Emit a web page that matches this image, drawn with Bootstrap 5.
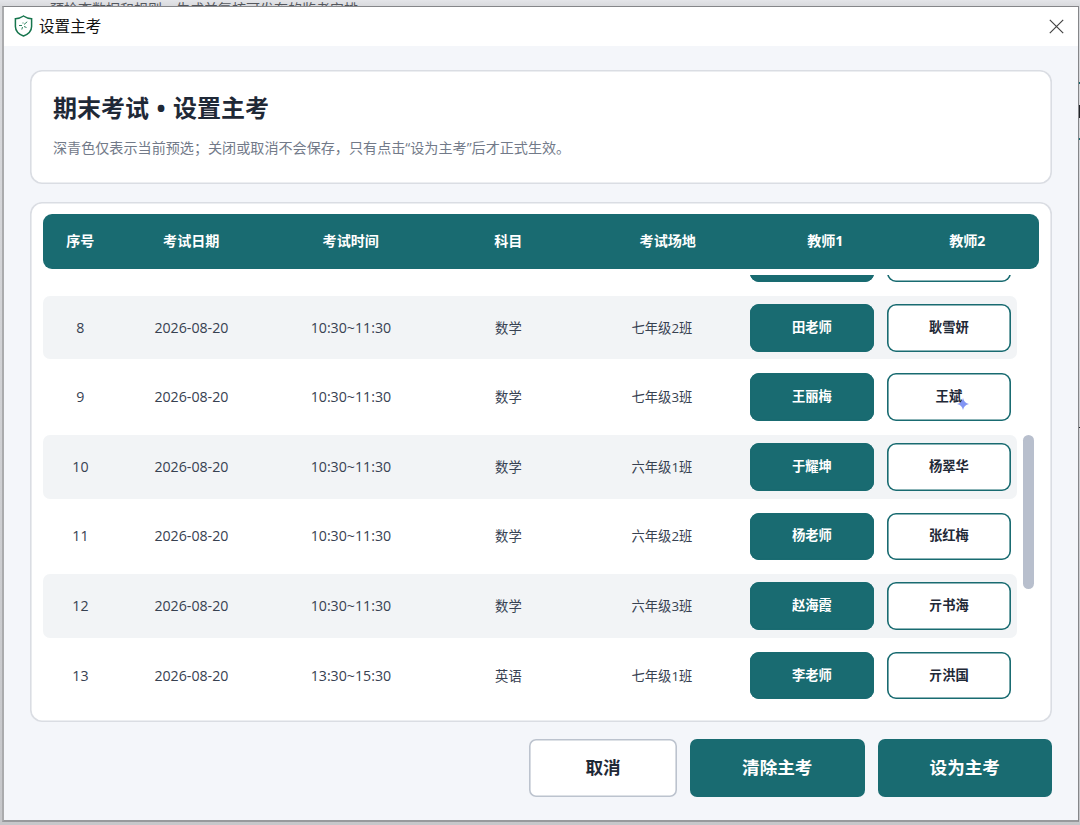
<!DOCTYPE html>
<html lang="zh-CN">
<head>
<meta charset="utf-8">
<title>设置主考</title>
<link href="https://cdn.jsdelivr.net/npm/bootstrap@5.3.0/dist/css/bootstrap.min.css" rel="stylesheet">
<style>
:root{--teal:#196b71;--ink:#1f2937}
body{width:1080px;height:825px;overflow:hidden;background:#d3d4d7;color:#374151;font-family:"Open Sans","Noto Sans CJK SC",sans-serif;font-size:13.3px;line-height:20px}
.desk{width:1080px;height:825px;padding:6px 1px 3px 2px;background:linear-gradient(#e4e5e9 0,#d9dadd 6px,#c6c7ca 100%)}
.behind-text{left:50px;top:-1px;font-size:14px;color:#55585e;line-height:20px;white-space:nowrap}
.window-box{position:relative;height:816px;background:#f4f6fa;border:1px solid #858689;border-left:2px solid #aaabad;border-bottom:2px solid #98999c}
.title-strip{height:39px;background:#fff;padding:0 14px 0 10px;font-size:15.6px;color:#111}
.title-strip span{margin:-2px 0 0 6px}
.title-strip svg{margin-top:-1px}
.panel{background:#fff;box-shadow:inset 0 0 0 1.6px #dadde3;border-radius:12px}
.intro{height:113.5px;padding:22px 23px 0}
.intro h1{font-size:24px;line-height:32px;color:var(--ink);margin:0}
.dot{width:24px}
.intro p{font-size:14.1px;line-height:20px;color:#727a89;margin:14px 0 0}
.work{padding:24px 26px 0 26px}
.sheet{height:520px;margin-top:18px;padding:12.5px 13px 0}
.head-row,.data-row{display:grid;align-items:center;text-align:center}
.head-row{grid-template-columns:74px 148px 171px 144px 175px 140px 144px;width:996px;height:54.5px;background:var(--teal);color:#fff;font-size:14.1px;font-weight:700;border-radius:9px}
.head-row span{padding-left:.5px}
.scroller{height:434px;width:996px;margin-top:6.500px}
.rows{width:974px;margin-top:-48.6px}
.data-row{grid-template-columns:74px 148px 171px 144px 163px 137px 137px;height:63.5px;margin-bottom:6.07px;border-radius:7px}
.data-row>*{padding-left:.8px}
.data-row.shaded{background:#f2f4f6}
.digits{font-size:14.2px}
.pick{width:123.5px;height:47.700px;border-radius:9px;padding:0;font-size:13.3px;font-weight:700;border:0;box-shadow:inset 0 0 0 1.6px var(--teal);color:var(--ink);background:#fff}
.pick.chosen{background:var(--teal);color:#fff}
.thumb{width:10.500px;height:154px;border-radius:6px;background:#b8bfcd;margin:160px 0 0 6px}
.spark{left:70px;top:25px;line-height:0}
.actions{margin-top:17px;gap:13px}
.actions .btn{height:58px;width:174.500px;border-radius:7px;padding-bottom:7px;font-size:17.6px;font-weight:700;background:var(--teal);color:#fff;border:0}
.actions .cancel{width:148px;background:#fff;color:var(--ink);box-shadow:inset 0 0 0 1.6px #bcc3ce}
.edge{right:0;width:1px;background:#186a70;height:2px}
</style>
</head>
<body>
<div class="desk position-relative">
  <div class="behind-text position-absolute">预检查数据和规则，生成并复核可发布的监考安排</div>
  <div class="window-box">
    <header class="title-strip d-flex align-items-center">
      <svg width="19" height="22" viewBox="0 0 19 22" fill="none" stroke="#16754d"><path d="M9.5 1Q13 3.5 17.6 3.8V11.500Q17.500 18 9.500 21Q1.500 18 1.400 11.500V3.800Q6 3.500 9.500 1Z" stroke-width="1.5"/><path d="M5 10.500H8M10 9.500L13.200 6.800M10 11.500L12.500 12.500M8.500 12L7.800 14.500M9 7.500V8.500" stroke-width=".9"/></svg>
      <span>设置主考</span>
      <svg class="ms-auto" width="15" height="15" viewBox="0 0 15 15" stroke="#444" stroke-width="1.2"><path d="M.8.8 14.200 14.200M14.200.8.8 14.200"/></svg>
    </header>
    <main class="work">
      <section class="panel intro">
        <h1 class="fw-bold d-flex">期末考试<span class="dot text-center">•</span>设置主考</h1>
        <p>深青色仅表示当前预选；关闭或取消不会保存，只有点击“设为主考”后才正式生效。</p>
      </section>
      <section class="panel sheet">
        <div class="head-row"><span>序号</span><span>考试日期</span><span>考试时间</span><span>科目</span><span>考试场地</span><span>教师1</span><span>教师2</span></div>
        <div class="scroller d-flex overflow-hidden">
          <div class="rows flex-shrink-0" id="rows"></div>
          <div class="thumb flex-shrink-0"></div>
        </div>
      </section>
      <footer class="actions d-flex justify-content-end">
        <button class="btn cancel">取消</button>
        <button class="btn">清除主考</button>
        <button class="btn">设为主考</button>
      </footer>
    </main>
  </div>
  <i class="edge position-absolute" style="top:82px"></i>
  <i class="edge position-absolute bg-dark" style="top:105px;height:13px"></i>
  <i class="edge position-absolute" style="top:138px"></i>
  <i class="edge position-absolute bg-dark" style="top:427px;height:1px"></i>
</div>
<script>
const exams = [
  [7, '10:30~11:30', '数学', '七年级1班', '', ''],
  [8, '10:30~11:30', '数学', '七年级2班', '田老师', '耿雪妍'],
  [9, '10:30~11:30', '数学', '七年级3班', '王丽梅', '王斌'],
  [10, '10:30~11:30', '数学', '六年级1班', '于耀坤', '杨翠华'],
  [11, '10:30~11:30', '数学', '六年级2班', '杨老师', '张红梅'],
  [12, '10:30~11:30', '数学', '六年级3班', '赵海霞', '亓书海'],
  [13, '13:30~15:30', '英语', '七年级1班', '李老师', '亓洪国']
];
// Four-pointed pointer marker on the hovered teacher
const spark = '<span class="spark position-absolute"><svg width="12" height="12" viewBox="0 0 12 12"><path d="M6 0Q7 5 12 6Q7 7 6 12Q5 7 0 6Q5 5 6 0Z" fill="#8295f4"/></svg></span>';
document.getElementById('rows').innerHTML = exams.map(([n, time, subject, room, a, b]) => {
  const cells = n === 7 ? '<span></span>'.repeat(5)
    : `<span class="digits">${n}</span><span class="digits">2026-08-20</span><span class="digits">${time}</span><span>${subject}</span><span>${room}</span>`;
  return `<div class="data-row${n % 2 ? '' : ' shaded'}">${cells}
    <div><button class="btn pick chosen">${a}</button></div>
    <div><button class="btn pick position-relative">${b}${n === 9 ? spark : ''}</button></div></div>`;
}).join('');
</script>
<script src="https://cdn.jsdelivr.net/npm/bootstrap@5.3.0/dist/js/bootstrap.bundle.min.js"></script>
</body>
</html>
